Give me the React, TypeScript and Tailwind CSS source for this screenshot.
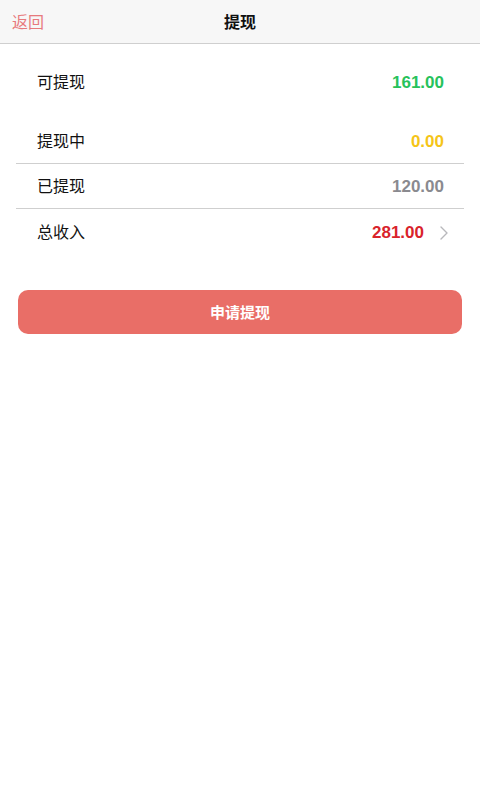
import React from 'react'

const font = { fontFamily: '"Liberation Sans", "Noto Sans CJK SC", sans-serif' }

type Row = {
  label: string
  value: string
  color: string
  arrow?: boolean
}

const rows: Row[] = [
  { label: '提现中', value: '0.00', color: 'text-[#f5c518]' },
  { label: '已提现', value: '120.00', color: 'text-[#8a8a8f]' },
  { label: '总收入', value: '281.00', color: 'text-[#d9232b]', arrow: true },
]

function Chevron() {
  return (
    <svg className="ml-[16px] h-[14px] w-[8px] text-[#b8b8bc]" viewBox="0 0 8 14" fill="none" aria-hidden="true">
      <path d="M1 1l6 6-6 6" stroke="currentColor" strokeWidth="1.4" strokeLinecap="round" strokeLinejoin="round" />
    </svg>
  )
}

export default function App() {
  return (
    <div className="min-h-[800px] w-[480px] bg-white" style={font}>
      <div className="relative flex h-[44px] items-center justify-center border-b border-[#cfcfcf] bg-[#f7f7f7] pt-[2px]">
        <span className="absolute left-[12px] text-[16px] text-[#e77a7d]">返回</span>
        <span className="text-[16px] font-bold text-[#111]">提现</span>
      </div>

      <div className="mt-[15px] flex h-[45px] items-center justify-between pl-[37px] pr-[36px] pt-[2px]">
        <span className="text-[16px] text-[#111]">可提现</span>
        <span className="text-[17px] font-bold text-[#27c25b]">161.00</span>
      </div>

      <div className="mx-[16px] mt-[15px]">
        {rows.map((row, i) => (
          <div
            key={row.label}
            className={`flex h-[45px] items-center justify-between pl-[21px] pt-[2px] ${row.arrow ? 'pr-[16px]' : 'pr-[20px]'} ${i < rows.length - 1 ? 'border-b border-[#cfcfcf]' : ''}`}
          >
            <span className="text-[16px] text-[#111]">{row.label}</span>
            <span className="flex items-center">
              <span className={`text-[17px] font-bold ${row.color}`}>{row.value}</span>
              {row.arrow ? <Chevron /> : null}
            </span>
          </div>
        ))}
      </div>

      <div className="mx-[18px] mt-[36px]">
        <button type="button" className="flex h-[44px] w-full items-center justify-center rounded-[10px] bg-[#e96e67] pt-[2px] text-[15px] font-bold text-white">
          申请提现
        </button>
      </div>
    </div>
  )
}
